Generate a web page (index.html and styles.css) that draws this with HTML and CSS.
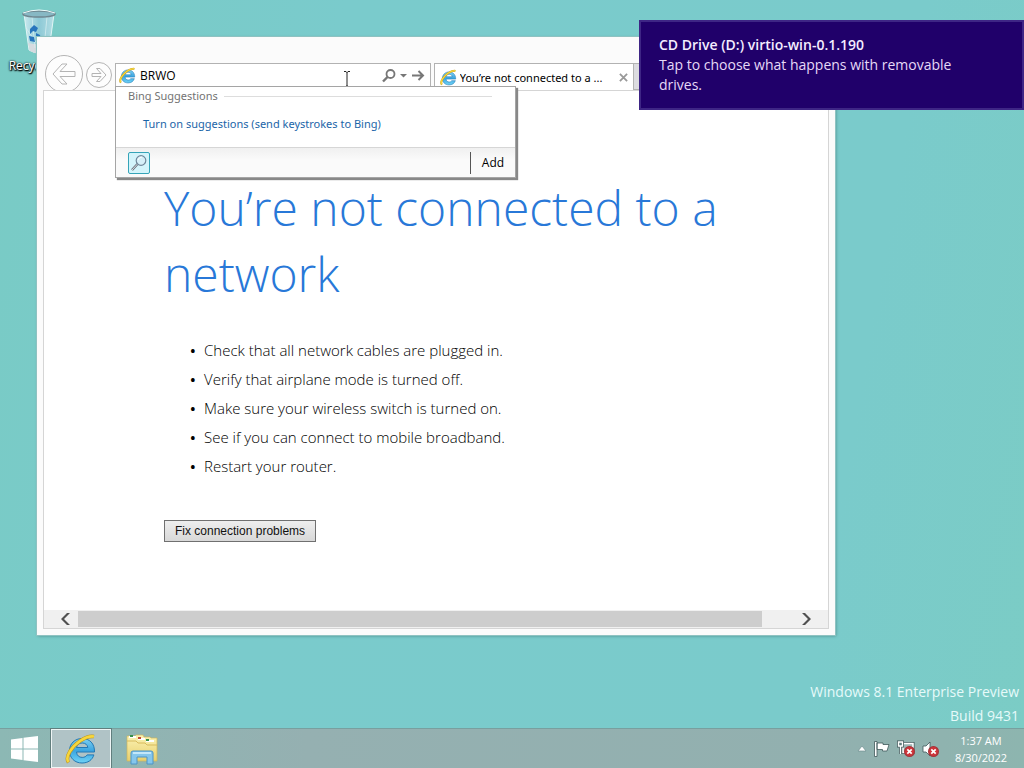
FILE: index.html
```html
<!DOCTYPE html>
<html lang="en">
<head>
<meta charset="utf-8">
<title>Desktop</title>
<link rel="stylesheet" href="styles.css">
</head>
<body>
<svg class="defs" aria-hidden="true">
  <defs>
    <linearGradient id="eblue" x1="0" y1="0" x2="0" y2="1"><stop offset="0" stop-color="#7dd0f2"/><stop offset=".5" stop-color="#3ba5e0"/><stop offset="1" stop-color="#6fd3f6"/></linearGradient>
    <linearGradient id="paper" x1="0" y1="0" x2="0" y2="1"><stop offset="0" stop-color="#fbf3b4"/><stop offset="1" stop-color="#e8cf6d"/></linearGradient>
    <linearGradient id="glass" x1="0" y1="0" x2="1" y2="0"><stop offset="0" stop-color="#c9e9ee"/><stop offset=".5" stop-color="#8dc9d6"/><stop offset="1" stop-color="#b4dee4"/></linearGradient>
    <symbol id="ie" viewBox="0 0 32 32">
      <path d="M29.500 19H11.500c.3 3.600 2.700 5.400 5.700 5.400 2.300 0 4-.9 4.900-2.500h6.800C27.300 27 23 30 17 30 9.800 30 4.500 25 4.500 17.800S9.900 5.500 17 5.500c7.500 0 12.800 5 12.500 13.500zM22.800 14.500c-.4-2.900-2.500-4.500-5.600-4.500s-5.200 1.700-5.700 4.500z" fill="url(#eblue)" stroke="#2379b4"/>
      <path d="M3.500 29.500C-.5 24 7 13.500 15 8 20 4.500 25 2.800 29 3.500" fill="none" stroke="#bd951f" stroke-width="3.600"/>
      <path d="M3.500 29C-.5 24 7 13.500 15 8 20 4.500 25 2.800 29 3.500" fill="none" stroke="#f6d63c" stroke-width="2.600"/>
    </symbol>
    <symbol id="bad" viewBox="0 0 10 10"><circle cx="5" cy="5" r="4.500" fill="#d0343a" stroke="#a3373c"/><path d="M3 3l4 4M7 3L3 7" stroke="#fff" stroke-width="1.500"/></symbol>
  </defs>
</svg>
<div class="desktop">
  <a class="shortcut" href="#bin">
    <svg viewBox="0 0 40 48" class="bin" aria-hidden="true">
      <path d="M4 6l5 36q10 6 20 0l5-36z" fill="url(#glass)" stroke="#e1f5f5"/>
      <path d="M8 35l2 8q9 5 18 0l2-9q-9 4-22 1z" fill="#d6dbe0"/>
      <path d="M12 9l3 31M27 9l-3 31M6 20l14 20" stroke="#dcf1f3" opacity=".7"/>
      <path d="M10 21l4-4 4 3-2 4-3-1-3 3zM16 25l4 2 1 5-5 1zM9 28l5 1 1 5-5-1z" fill="#2875bd"/>
      <ellipse cx="19" cy="6" rx="16" ry="3" fill="#87b8c4" stroke="#6f8790" stroke-width="1.500"/>
      <path d="M3 5q16-6 32 0" fill="none" stroke="#f2ffff"/>
    </svg>
    <span>Recycle Bin</span>
  </a>

  <section class="window" aria-label="Internet Explorer">
    <header class="toolbar">
      <button class="nav back" aria-label="Back"><svg viewBox="0 0 38 38"><circle cx="19" cy="19" r="18.500"/><path d="M8 19l9-10h5l-7 7.500h15v5H15l7 7.500h-5z"/></svg></button>
      <button class="nav forward" aria-label="Forward"><svg viewBox="0 0 26 26"><circle cx="13" cy="13" r="12.500"/><path d="M20 13l-6-6.500h-3.500l4.500 5H6v3h9l-4.500 5H14z"/></svg></button>
      <div class="address">
        <svg class="ie-small"><use href="#ie"/></svg>
        <input class="url" type="text" value="BRWO" aria-label="Address">
        <button class="tool" aria-label="Search"><svg width="14" height="14" viewBox="0 0 14 14"><circle cx="8.500" cy="5" r="4" stroke-width="1.800"/><path d="M5.500 8L1 12.500" stroke-width="2.400"/></svg></button>
        <button class="tool" aria-label="Show list"><svg width="7" height="14" viewBox="0 0 7 14"><path d="M0 5h7L3.500 8.500z" class="solid"/></svg></button>
        <button class="tool" aria-label="Go"><svg width="14" height="14" viewBox="0 0 14 14"><path d="M1 6.500h11M7.500 2L12 6.500 7.500 11" stroke-width="2"/></svg></button>
        <svg class="ibeam" viewBox="0 0 8 16" aria-hidden="true"><path d="M1 .5h2l1 1 1-1h2M4 1v14M1 15.500h2l1-1 1 1h2"/></svg>
        <div class="suggestions">
          <div class="heading">Bing Suggestions</div>
          <a class="enable" href="#suggest">Turn on suggestions (send keystrokes to Bing)</a>
          <div class="providers">
            <button class="provider" aria-label="Bing"><svg viewBox="0 0 20 20"><path d="M8.500 11L3 17" stroke="#68727d" stroke-width="2.500"/><path d="M8.500 11L3 17" stroke="#d9dde2"/><circle cx="12" cy="7.500" r="4.800" fill="#d5eff8" stroke="#70879a" stroke-width="1.200"/><path d="M9 7q1-3 4-3" fill="none" stroke="#fff"/></svg></button>
            <button class="add">Add</button>
          </div>
        </div>
      </div>
      <div class="tab">
        <svg class="ie-small"><use href="#ie"/></svg>
        <span>You’re not connected to a ...</span>
        <button class="close" aria-label="Close tab"><svg viewBox="0 0 10 10"><path d="M1 1l8 8M9 1L1 9"/></svg></button>
      </div>
      <button class="new-tab" aria-label="New tab"></button>
    </header>
    <main class="page">
      <article>
        <h1>You’re not connected to a network</h1>
        <ul>
          <li>Check that all network cables are plugged in.</li>
          <li>Verify that airplane mode is turned off.</li>
          <li>Make sure your wireless switch is turned on.</li>
          <li>See if you can connect to mobile broadband.</li>
          <li>Restart your router.</li>
        </ul>
        <button class="fix">Fix connection problems</button>
      </article>
      <div class="scroll">
        <button aria-label="Scroll left"><svg viewBox="0 0 10 12"><path d="M9 0L3 6l6 6H6L0 6l6-6z"/></svg></button>
        <div class="track"><div class="thumb"></div></div>
        <button aria-label="Scroll right"><svg viewBox="0 0 10 12"><path d="M1 0l6 6-6 6h3l6-6-6-6z"/></svg></button>
      </div>
    </main>
  </section>

  <aside class="toast">
    <strong>CD Drive (D:) virtio-win-0.1.190</strong>
    <p>Tap to choose what happens with removable drives.</p>
  </aside>

  <div class="build">Windows 8.1 Enterprise Preview<br>Build 9431</div>

  <footer class="taskbar">
    <button class="task start" aria-label="Start"><svg viewBox="0 0 28 28"><path d="M0 4.500L11.500 3v10.500H0zM12.500 2.800L27 1v12.500H12.500zM0 14.500h11.500V25L0 23.500zM12.500 14.500H27V27l-14.500-1.800z"/></svg></button>
    <button class="task active" aria-label="Internet Explorer"><svg><use href="#ie"/></svg></button>
    <button class="task" aria-label="File Explorer"><svg viewBox="0 0 32 32">
      <path d="M1 3h8l1-1h7l1 2h6l1 1h6v23H1z" fill="url(#paper)" stroke="#cdb45b" stroke-width=".7"/>
      <path d="M3 3h7v2H3zM12 5h7v2h-7zM20 7h8v2h-8z" fill="#fff"/><path d="M4 2h3v2H4zM20 6h3v2h-3z" fill="#35914c"/><path d="M12 4h3v2h-3z" fill="#bf4b35"/>
      <path d="M1 8h9l2 2h7l2 2h10" fill="none" stroke="#d7ba5d"/>
      <path d="M5 31V20q0-2 2-2h18q2 0 2 2v11h-6v-7H11v7z" fill="#85c6ec" stroke="#4c94c6"/><path d="M7 20h18" stroke="#d9f2ff" stroke-width="1.500"/>
    </svg></button>
    <div class="tray">
      <button aria-label="Show hidden icons"><svg width="10" height="8" viewBox="0 0 10 8"><path d="M5 1l4 5H1z" fill="#fff" stroke="#708f90" stroke-width=".7"/></svg></button>
      <button aria-label="Action Center"><svg width="18" height="18" viewBox="0 0 18 18"><path d="M1.500 1.500H4v15H1.500zM4 3h6v1.500h6l-2 6.500H9.500V9.500H4z" fill="#fff" stroke="#40595b" stroke-width=".8"/></svg></button>
      <button aria-label="Network disconnected"><svg width="18" height="18" viewBox="0 0 18 18"><path d="M6 3.500h10v9H6z" fill="#9bb6b5" stroke="#40595b" stroke-width="3"/><path d="M6 3.500h10v9H6z" fill="#9bb6b5" stroke="#fff" stroke-width="1.500"/><path d="M1.500 2h4v4h-4zM3.500 6v8" fill="#607d7e" stroke="#40595b" stroke-width="3"/><path d="M1.500 2h4v4h-4zM3.500 6v8" fill="#607d7e" stroke="#fff" stroke-width="1.400"/><use href="#bad" x="7" y="6" width="11" height="11"/></svg></button>
      <button aria-label="Sound muted"><svg width="18" height="18" viewBox="0 0 18 18"><path d="M2 6h3l4-4v14l-4-4H2z" fill="#fff" stroke="#40595b" stroke-width=".8"/><use href="#bad" x="7" y="6" width="11" height="11"/></svg></button>
      <time>1:37 AM<br>8/30/2022</time>
    </div>
  </footer>
</div>
</body>
</html>
```
FILE: styles.css
```css
* { box-sizing: border-box; }
body { margin: 0; font-family: "Open Sans", "Noto Sans", sans-serif; font-size: 12px; }
button, input { font: inherit; border: 0; padding: 0; margin: 0; background: none; color: inherit; }
button svg { display: block; }
.defs { position: absolute; width: 0; height: 0; }
.desktop { position: relative; min-height: 100vh; overflow: hidden; display: flex; flex-direction: column; justify-content: flex-end; background: linear-gradient(100deg, #79cbc5, #7acbcc 30%, #7acbcb 80%, #7bccc5); }

.shortcut { position: absolute; left: 0; top: 6px; width: 80px; display: flex; flex-direction: column; align-items: center; color: #fff; text-decoration: none; text-shadow: 0 1px 2px #000, 1px 1px 1px #000, 0 0 2px #000; line-height: 16px; }
.bin { width: 40px; height: 52px; }

.window { position: absolute; left: 37px; top: 37px; right: 189px; bottom: 133px; padding: 0 6px 6px; display: flex; flex-direction: column; background: #fbfbfb; box-shadow: 0 0 0 1px #8fc2c1, 1px 1px 3px #4b8c8c; }
.toolbar { height: 53px; display: flex; align-items: flex-end; padding-left: 2px; }
.nav svg { width: 100%; height: 100%; fill: #fdfdfd; stroke: #b4b4b4; }
.back { width: 38px; height: 38px; margin: 0 3px -3px 0; }
.forward { width: 26px; height: 26px; margin: 0 3px 2px 0; }
.address { position: relative; z-index: 2; flex: 316 1 0; height: 25px; margin: 0 3px 2px 0; display: flex; align-items: center; gap: 4px; padding: 0 5px 0 3px; background: #fff; border: 1px solid #b2b2b2; }
.ie-small { width: 17px; height: 17px; flex: none; }
.url { flex: 1; min-width: 0; height: 20px; outline: 0; }
.tool svg { fill: none; stroke: #777; }
.tool .solid { fill: #777; stroke: none; }
.ibeam { position: absolute; right: 79px; top: 7px; width: 8px; height: 16px; fill: none; stroke: #222; }
.suggestions { position: absolute; left: -1px; top: 22px; width: 401px; background: #fff; border: 1px solid #a5a5a5; box-shadow: 2px 2px 1px #888; }
.heading { display: flex; align-items: center; gap: 6px; padding: 0 23px 0 12px; font-family: "Noto Sans", sans-serif; font-size: 11px; line-height: 18px; color: #737373; }
.heading::after { content: ""; flex: 1; height: 1px; background: #ddd; }
.enable { display: block; padding: 10px 27px 14px; font-family: "Noto Sans", sans-serif; font-size: 11px; line-height: 18px; color: #1b65a8; text-decoration: none; }
.providers { display: flex; align-items: center; justify-content: space-between; height: 30px; padding: 0 0 0 12px; border-top: 1px solid #d6d6d6; background: linear-gradient(#f0f0f0, #fafafa 40%); }
.provider { width: 22px; height: 22px; border: 1px solid #35a4b8; border-radius: 2px; background: #d3f4fb; }
.provider svg { width: 20px; height: 20px; }
.add { width: 45px; height: 22px; border-left: 1px solid #555; }
.tab { flex: 194 1 0; height: 27px; display: flex; align-items: center; gap: 3px; padding: 0 5px; background: #fff; border: 1px solid #b2b2b2; border-bottom: 0; white-space: nowrap; overflow: hidden; }
.tab span { flex: 1; overflow: hidden; font-family: "Noto Sans", sans-serif; font-size: 11px; }
.close { width: 9px; height: 9px; }
.close svg { fill: none; stroke: #999; stroke-width: 2; }
.new-tab { flex: 201 1 0; height: 27px; background: #dcdce0; border: 1px solid #b2b2b2; border-left: 0; }
.page { position: relative; flex: 1; display: flex; flex-direction: column; background: #fff; border: 1px solid #d5d5d5; }
article { flex: 1; padding: 84px 60px 0 120px; font-size: 15px; }
h1 { margin: 0; font-size: 48px; line-height: 66px; font-weight: 300; color: #2878d8; }
ul { margin: 29px 0 0; padding: 0 0 0 40px; list-style: none; }
li { display: flex; line-height: 29px; font-weight: 300; color: #000; }
li::before { content: "•"; width: 14px; margin-left: -14px; font-weight: 600; }
.fix { margin-top: 39px; padding: 0 10px; height: 22px; font-family: "Liberation Sans", Arial, sans-serif; font-size: 12px; color: #111; border: 1px solid #707070; background: linear-gradient(#eee, #d8d8d8); }
.scroll { height: 18px; display: flex; align-items: center; background: #f0f0f0; padding: 0 16px; }
.scroll button { width: 18px; display: flex; }
.scroll button:first-child { padding-left: 1px; }
.scroll button:last-child { justify-content: flex-end; padding-right: 1px; }
.scroll svg { width: 10px; height: 12px; fill: #505050; }
.track { flex: 1; height: 16px; }
.thumb { width: 95.600%; height: 100%; background: #cdcdcd; }

.toast { position: absolute; z-index: 4; right: 0; top: 20px; width: 385px; padding: 13px 58px 13px 18px; border: 2px solid #3e2585; background: #20006a; color: #e6d9f7; font-size: 14px; line-height: 20px; }
.toast strong { font-weight: 600; color: #f4edff; }
.toast p { margin: 0; }

.build { padding: 0 5px 0 0; text-align: right; font-size: 14px; line-height: 24px; color: #e6fafa; }
.taskbar { height: 40px; display: flex; border-top: 1px solid #789f9f; background: linear-gradient(90deg, #8cb8b4, #95b0b1 30%, #92b0af 80%, #8db5af); }
.task { width: 60px; margin-right: 1px; display: flex; align-items: center; justify-content: center; }
.start { width: 50px; }
.task svg { width: 32px; height: 32px; }
.start svg { width: 28px; height: 28px; fill: #fff; }
.active { border: 1px solid #eef5f5; background: #b0c3c6; box-shadow: 0 0 0 1px #617e7e; }
.tray { margin-left: auto; display: flex; align-items: center; gap: 6px; padding-right: 17px; color: #fff; }
.tray time { margin-left: 10px; text-align: center; font-size: 11px; line-height: 17px; }
```
